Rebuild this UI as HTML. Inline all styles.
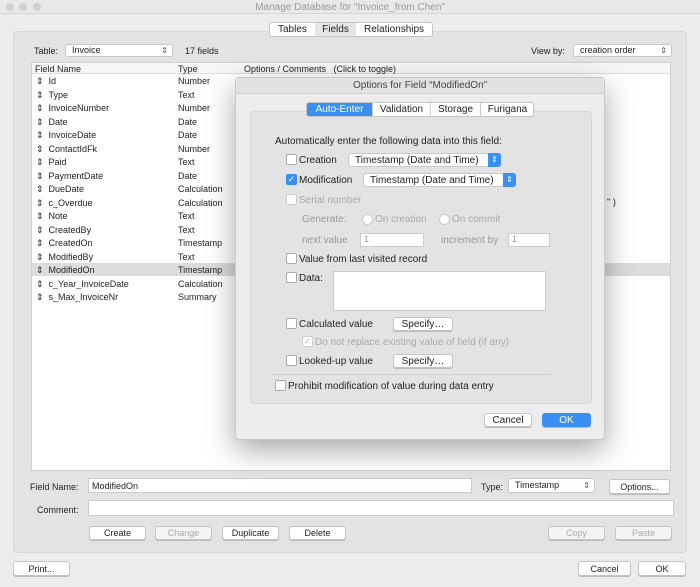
<!DOCTYPE html><html><head><style>
*{box-sizing:border-box;margin:0;padding:0}
body{width:700px;height:587px;background:#ececec;font-family:"Liberation Sans",sans-serif;font-size:9px;color:#222;position:relative;overflow:hidden}
.a{position:absolute}
.btn{position:absolute;background:#fff;border:1px solid #c4c4c4;border-radius:3px;text-align:center;box-shadow:0 1px 0 #bbb}
.dis{color:#aaa;background:#f4f4f4}
.sel{position:absolute;background:#fff;border:1px solid #c8c8c8;border-radius:3px;padding-left:6px}
.sel:after{content:"⇕";position:absolute;right:4px;top:0;font-size:8px;color:#555}
.cb{position:absolute;width:11px;height:11px;border:1px solid #aaa;border-radius:2px;background:#fff;margin-top:-1px}
.d{font-size:10px}
.inp{position:absolute;background:#fff;border:1px solid #ccc}
</style></head><body>
<div class="a" style="left:0;top:0;width:700px;height:14px;background:#e8e8e8;border-bottom:1px solid #d6d6d6"></div>
<div class="a" style="left:6px;top:3px;width:8px;height:8px;border-radius:50%;background:#d0d0d0"></div>
<div class="a" style="left:19px;top:3px;width:8px;height:8px;border-radius:50%;background:#d0d0d0"></div>
<div class="a" style="left:33px;top:3px;width:8px;height:8px;border-radius:50%;background:#d0d0d0"></div>
<div class="a" style="left:0;top:2px;width:700px;text-align:center;color:#9a9a9a;font-size:10px">Manage Database for “Invoice_from Chen”</div>
<div class="a" style="left:13px;top:31px;width:674px;height:522px;background:#e3e3e3;border:1px solid #d8d8d8;border-radius:4px"></div>
<div class="a" style="left:269px;top:22px;width:164px;height:15px;background:#fff;border:1px solid #c4c4c4;border-radius:3px;font-size:10px;line-height:13px">
<span class="a" style="left:8px">Tables</span><span class="a" style="left:45px;width:41px;background:#e6e6e6;text-align:center">Fields</span><span class="a" style="left:94px">Relationships</span></div>
<div class="a" style="left:34px;top:46px">Table:</div>
<div class="sel" style="left:65px;top:44px;width:108px;height:13px;line-height:11px">Invoice</div>
<div class="a" style="left:185px;top:46px">17 fields</div>
<div class="a" style="left:531px;top:46px">View by:</div>
<div class="sel" style="left:573px;top:44px;width:99px;height:13px;line-height:11px">creation order</div>
<div class="a" style="left:31px;top:62px;width:640px;height:409px;background:#fff;border:1px solid #d0d0d0"></div>
<div class="a" style="left:32px;top:63px;width:638px;height:11px;background:#f6f6f6;border-bottom:1px solid #ddd"></div>
<div class="a" style="left:35px;top:64px">Field Name</div><div class="a" style="left:178px;top:64px">Type</div><div class="a" style="left:244px;top:64px">Options / Comments &nbsp;&nbsp;(Click to toggle)</div>
<div class="a" style="left:32px;top:263px;width:638px;height:13px;background:#dcdcdc"></div>
<div class="a" style="left:36px;top:75px;line-height:13.5px">
<div>⇕ &nbsp;Id</div><div>⇕ &nbsp;Type</div><div>⇕ &nbsp;InvoiceNumber</div><div>⇕ &nbsp;Date</div><div>⇕ &nbsp;InvoiceDate</div><div>⇕ &nbsp;ContactIdFk</div><div>⇕ &nbsp;Paid</div><div>⇕ &nbsp;PaymentDate</div><div>⇕ &nbsp;DueDate</div><div>⇕ &nbsp;c_Overdue</div><div>⇕ &nbsp;Note</div><div>⇕ &nbsp;CreatedBy</div><div>⇕ &nbsp;CreatedOn</div><div>⇕ &nbsp;ModifiedBy</div><div>⇕ &nbsp;ModifiedOn</div><div>⇕ &nbsp;c_Year_InvoiceDate</div><div>⇕ &nbsp;s_Max_InvoiceNr</div></div>
<div class="a" style="left:178px;top:75px;line-height:13.5px">
<div>Number</div><div>Text</div><div>Number</div><div>Date</div><div>Date</div><div>Number</div><div>Text</div><div>Date</div><div>Calculation</div><div>Calculation</div><div>Text</div><div>Text</div><div>Timestamp</div><div>Text</div><div>Timestamp</div><div>Calculation</div><div>Summary</div></div>
<div class="a" style="left:607px;top:197px">'' )</div>
<div class="a" style="left:30px;top:482px">Field Name:</div>
<div class="inp" style="left:88px;top:478px;width:384px;height:15px;padding:2px 3px">ModifiedOn</div>
<div class="a" style="left:481px;top:482px">Type:</div>
<div class="sel" style="left:508px;top:478px;width:87px;height:15px;line-height:13px">Timestamp</div>
<div class="btn" style="left:609px;top:479px;width:61px;height:15px;line-height:14px">Options...</div>
<div class="a" style="left:37px;top:505px">Comment:</div>
<div class="inp" style="left:88px;top:500px;width:586px;height:16px"></div>
<div class="btn" style="left:89px;top:526px;width:57px;height:14px;line-height:13px">Create</div>
<div class="btn dis" style="left:155px;top:526px;width:57px;height:14px;line-height:13px">Change</div>
<div class="btn" style="left:222px;top:526px;width:57px;height:14px;line-height:13px">Duplicate</div>
<div class="btn" style="left:289px;top:526px;width:57px;height:14px;line-height:13px">Delete</div>
<div class="btn dis" style="left:548px;top:526px;width:57px;height:14px;line-height:13px">Copy</div>
<div class="btn dis" style="left:615px;top:526px;width:57px;height:14px;line-height:13px">Paste</div>
<div class="btn" style="left:13px;top:561px;width:57px;height:15px;line-height:14px">Print...</div>
<div class="btn" style="left:578px;top:561px;width:53px;height:15px;line-height:14px">Cancel</div>
<div class="btn" style="left:638px;top:561px;width:48px;height:15px;line-height:14px">OK</div>
<!-- dialog -->
<div class="a d" style="left:235px;top:77px;width:370px;height:363px;background:#ececec;border:1px solid #c8c8c8;border-radius:4px;box-shadow:0 10px 30px rgba(0,0,0,.35)">
<div class="a" style="left:0;top:0;width:368px;height:16px;background:#e2e2e2;border-bottom:1px solid #d0d0d0;text-align:center;line-height:15px;color:#444">Options for Field “ModifiedOn”</div>
<div class="a" style="left:14px;top:33px;width:342px;height:293px;background:#e3e3e3;border:1px solid #d6d6d6;border-radius:4px"></div>
<div class="a" style="left:70px;top:24px;width:228px;height:15px;background:#fff;border:1px solid #c4c4c4;border-radius:3px;line-height:13px">
<span class="a" style="left:0;width:65px;height:13px;background:#3b8ff3;color:#fff;text-align:center;border-radius:2px 0 0 2px">Auto-Enter</span>
<span class="a" style="left:65px;width:58px;text-align:center;border-left:1px solid #ccc">Validation</span>
<span class="a" style="left:123px;width:50px;text-align:center;border-left:1px solid #ccc">Storage</span>
<span class="a" style="left:173px;width:54px;text-align:center;border-left:1px solid #ccc">Furigana</span></div>
<div class="a" style="left:39px;top:58px">Automatically enter the following data into this field:</div>
<div class="cb" style="left:50px;top:77px"></div><div class="a" style="left:63px;top:77px">Creation</div>
<div class="sel" style="left:112px;top:75px;width:153px;height:14px;line-height:13px">Timestamp (Date and Time)</div>
<div class="a" style="left:252px;top:75px;width:13px;height:14px;background:#3b8ff3;border-radius:0 3px 3px 0;color:#fff;font-size:8px;text-align:center;line-height:14px">⇕</div>
<div class="cb" style="left:50px;top:97px;background:#3b8ff3;border-color:#3b8ff3;color:#fff;font-size:9px;line-height:9px;text-align:center">✓</div><div class="a" style="left:63px;top:97px">Modification</div>
<div class="sel" style="left:127px;top:95px;width:153px;height:14px;line-height:13px">Timestamp (Date and Time)</div>
<div class="a" style="left:267px;top:95px;width:13px;height:14px;background:#3b8ff3;border-radius:0 3px 3px 0;color:#fff;font-size:8px;text-align:center;line-height:14px">⇕</div>
<div class="cb" style="left:50px;top:117px;border-color:#ccc"></div><div class="a" style="left:63px;top:117px;color:#aaa">Serial number</div>
<div class="a" style="left:66px;top:136px;color:#999">Generate:</div>
<div class="a" style="left:126px;top:136px;width:11px;height:11px;border-radius:50%;border:1px solid #ccc;background:#fff"></div>
<div class="a" style="left:139px;top:136px;color:#aaa">On creation</div>
<div class="a" style="left:203px;top:136px;width:11px;height:11px;border-radius:50%;border:1px solid #ccc;background:#fff"></div>
<div class="a" style="left:216px;top:136px;color:#aaa">On commit</div>
<div class="a" style="left:66px;top:157px;color:#999">next value</div>
<div class="inp" style="left:124px;top:155px;width:64px;height:14px;color:#999;padding-left:3px;font-size:9px">1</div>
<div class="a" style="left:205px;top:157px;color:#999">increment by</div>
<div class="inp" style="left:272px;top:155px;width:42px;height:14px;color:#999;padding-left:3px;font-size:9px">1</div>
<div class="cb" style="left:50px;top:176px"></div><div class="a" style="left:63px;top:176px">Value from last visited record</div>
<div class="cb" style="left:50px;top:195px"></div><div class="a" style="left:63px;top:195px">Data:</div>
<div class="inp" style="left:97px;top:193px;width:213px;height:40px"></div>
<div class="cb" style="left:50px;top:241px"></div><div class="a" style="left:63px;top:241px">Calculated value</div>
<div class="btn" style="left:157px;top:239px;width:60px;height:14px;line-height:13px">Specify…</div>
<div class="cb" style="left:66px;top:259px;border-color:#ccc;color:#aaa;font-size:8px;line-height:9px;text-align:center">✓</div><div class="a" style="left:79px;top:259px;color:#aaa">Do not replace existing value of field (if any)</div>
<div class="cb" style="left:50px;top:278px"></div><div class="a" style="left:63px;top:278px">Looked-up value</div>
<div class="btn" style="left:157px;top:276px;width:60px;height:14px;line-height:13px">Specify…</div>
<div class="a" style="left:35px;top:296px;width:280px;height:1px;background:#d0d0d0"></div>
<div class="cb" style="left:39px;top:303px"></div><div class="a" style="left:52px;top:303px">Prohibit modification of value during data entry</div>
<div class="btn" style="left:248px;top:335px;width:48px;height:14px;line-height:13px">Cancel</div>
<div class="btn" style="left:306px;top:335px;width:49px;height:14px;line-height:13px;background:#3b8ff3;border-color:#3b8ff3;color:#fff">OK</div>
</div>
</body></html>
